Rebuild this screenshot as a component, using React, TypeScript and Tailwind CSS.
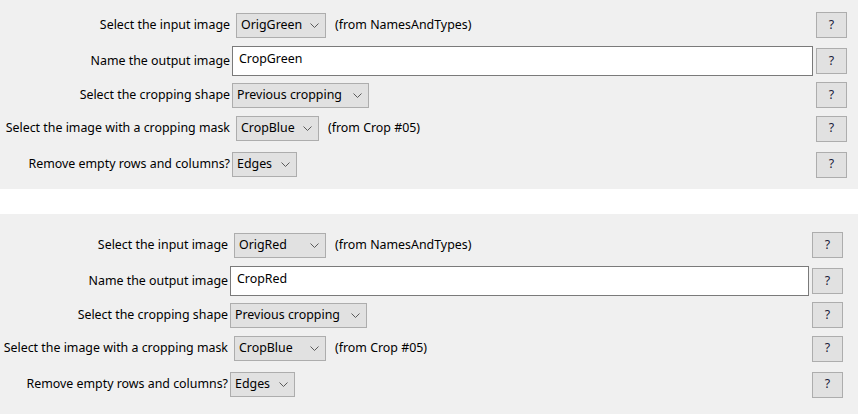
import React from 'react'

type Row =
  | { kind: 'combo'; label: string; value: string; width: string; inset?: boolean; note?: string; h: string }
  | { kind: 'text'; label: string; value: string; h: string }

function Chevron() {
  return (
    <svg width="9" height="5" viewBox="0 0 9 5" className="shrink-0">
      <path d="M0.5 0.5 L4.5 4.5 L8.5 0.5" fill="none" stroke="#5a5a5a" strokeWidth="1" />
    </svg>
  )
}

function Combo({ value, width, inset }: { value: string; width: string; inset?: boolean }) {
  return (
    <div
      className={`flex h-[25px] items-center justify-between border border-[#adadad] bg-[#e1e1e1] pl-[4px] pr-[6px] ${width} ${inset ? 'ml-[4px]' : ''}`}
    >
      <span className="whitespace-nowrap">{value}</span>
      <Chevron />
    </div>
  )
}

function HelpButton() {
  return (
    <div className="flex h-[26px] w-[31px] shrink-0 items-center justify-center border border-[#adadad] bg-[#e1e1e1] text-[#1b1b3a]">
      ?
    </div>
  )
}

function Panel({ rows, pad, labelW }: { rows: Row[]; pad: string; labelW: string }) {
  return (
    <div className={`bg-[#f0f0f0] ${pad}`}>
      {rows.map((r) => (
        <div key={r.label} className={`flex items-center ${r.h}`}>
          <div className={`${labelW} shrink-0 whitespace-nowrap text-right`}>{r.label}</div>
          <div className="ml-[2px] flex min-w-0 flex-1 items-center">
            {r.kind === 'combo' ? (
              <>
                <Combo value={r.value} width={r.width} inset={r.inset} />
                {r.note && <span className="ml-[9px] whitespace-nowrap">{r.note}</span>}
              </>
            ) : (
              <div className="flex h-[30px] flex-1 items-center border border-[#7a7a7a] bg-white pb-[4px] pl-[6px]">
                {r.value}
              </div>
            )}
          </div>
          <div className="ml-[3px]">
            <HelpButton />
          </div>
        </div>
      ))}
    </div>
  )
}

export default function App() {
  const first: Row[] = [
    { kind: 'combo', label: 'Select the input image', value: 'OrigGreen', width: 'w-[90px]', inset: true, note: '(from NamesAndTypes)', h: 'h-[34px]' },
    { kind: 'text', label: 'Name the output image', value: 'CropGreen', h: 'h-[38px]' },
    { kind: 'combo', label: 'Select the cropping shape', value: 'Previous cropping', width: 'w-[137px]', h: 'h-[30px]' },
    { kind: 'combo', label: 'Select the image with a cropping mask', value: 'CropBlue', width: 'w-[83px]', inset: true, note: '(from Crop #05)', h: 'h-[37px]' },
    { kind: 'combo', label: 'Remove empty rows and columns?', value: 'Edges', width: 'w-[65px]', h: 'h-[35px]' },
  ]
  const second: Row[] = [
    { kind: 'combo', label: 'Select the input image', value: 'OrigRed', width: 'w-[92px]', inset: true, note: '(from NamesAndTypes)', h: 'h-[34px]' },
    { kind: 'text', label: 'Name the output image', value: 'CropRed', h: 'h-[38px]' },
    { kind: 'combo', label: 'Select the cropping shape', value: 'Previous cropping', width: 'w-[137px]', h: 'h-[30px]' },
    { kind: 'combo', label: 'Select the image with a cropping mask', value: 'CropBlue', width: 'w-[92px]', inset: true, note: '(from Crop #05)', h: 'h-[37px]' },
    { kind: 'combo', label: 'Remove empty rows and columns?', value: 'Edges', width: 'w-[65px]', h: 'h-[35px]' },
  ]
  return (
    <div className="h-[414px] w-[858px] overflow-hidden bg-white font-['Noto_Sans',sans-serif] text-[12.4px] leading-none text-black">
      <Panel rows={first} pad="pt-[8px] pb-[7px] pr-[11px]" labelW="w-[230px]" />
      <div className="h-[25px]" />
      <Panel rows={second} pad="pt-[14px] pb-[20px] pr-[15px]" labelW="w-[228px]" />
    </div>
  )
}
